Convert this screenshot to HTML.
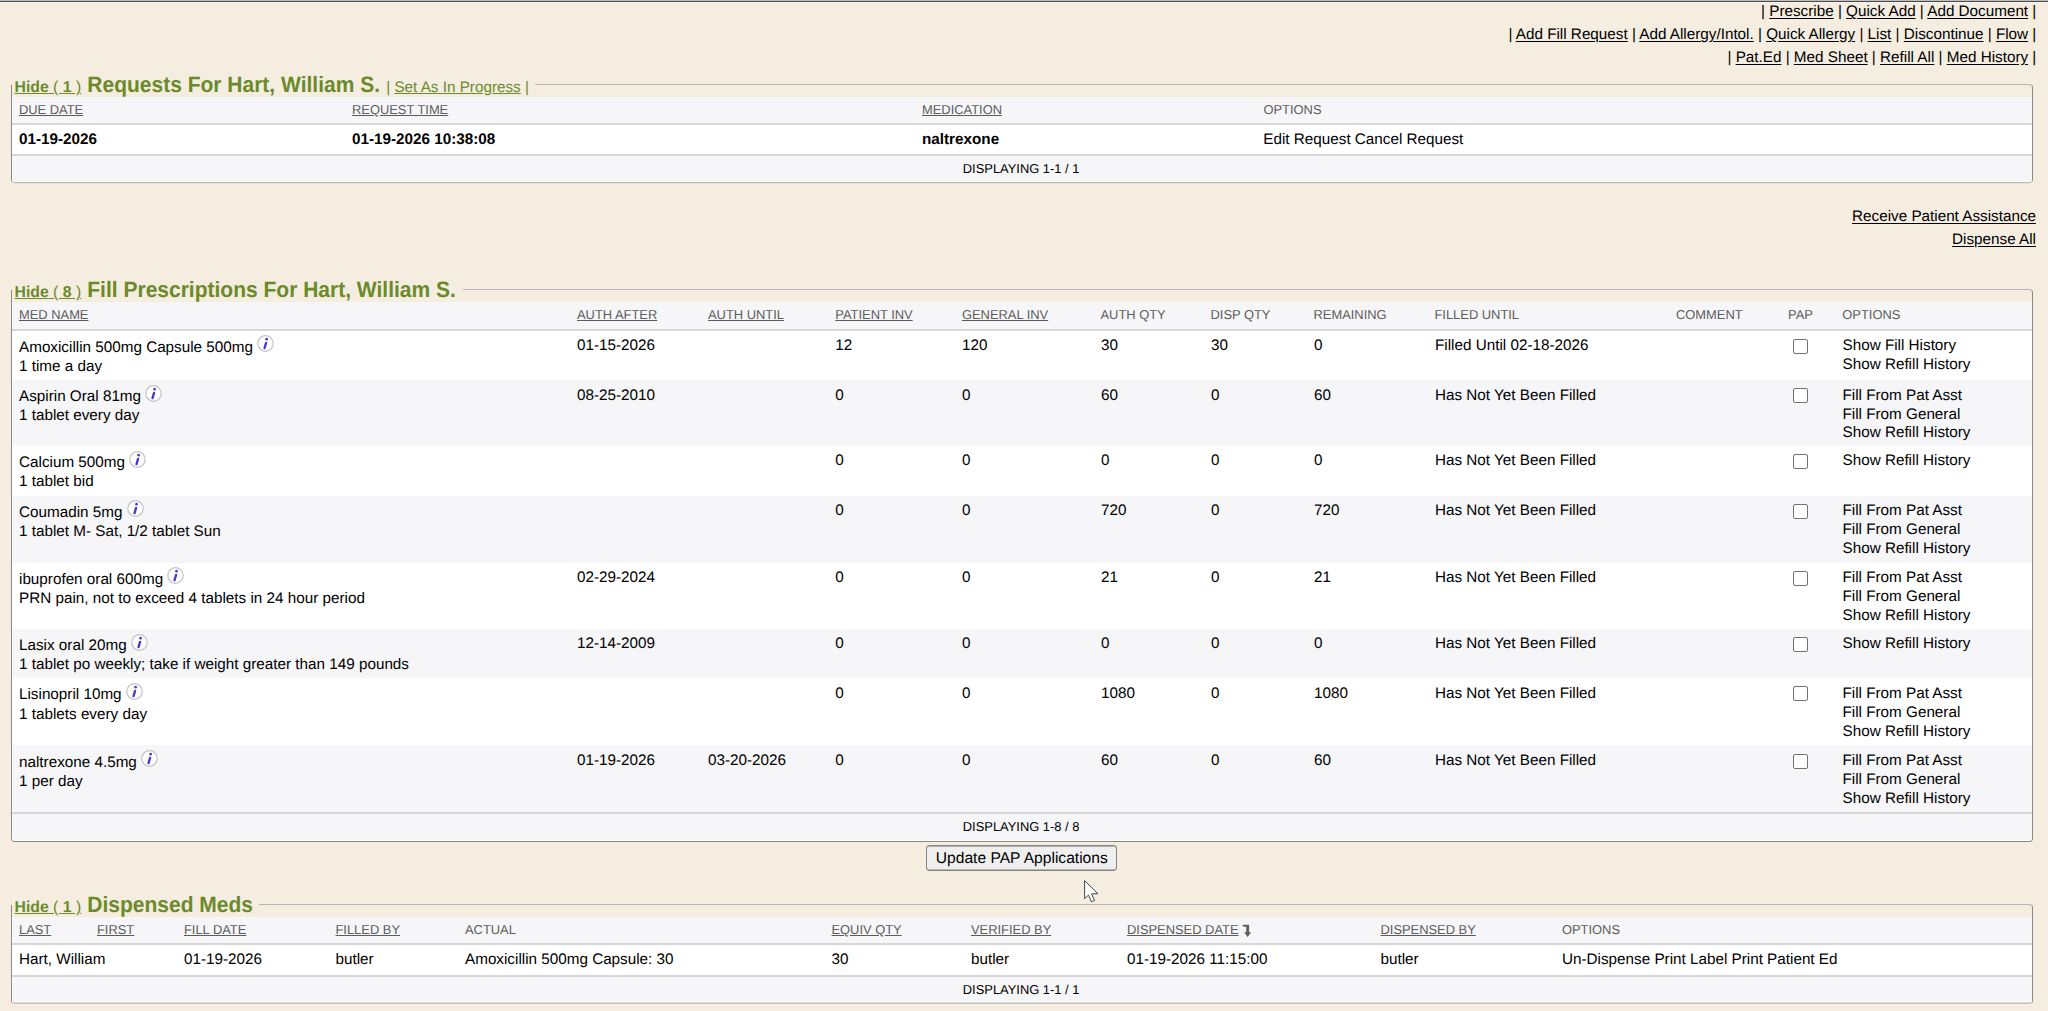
<!DOCTYPE html>
<html><head><meta charset="utf-8"><title>Fill Prescriptions</title>
<style>
html,body{margin:0;padding:0;}
body{width:2048px;height:1011px;overflow:hidden;position:relative;background:#F4EDE0;font-family:"Liberation Sans",sans-serif;color:#000000;}
.t{position:absolute;white-space:nowrap;line-height:1;text-rendering:geometricPrecision;}
.bx{position:absolute;}
.fs{position:absolute;box-sizing:border-box;border:1px solid #888;border-top-color:#b6b6b6;border-radius:4px;border-top-left-radius:0;background:#F4EDE0;overflow:hidden;}
.lg{position:absolute;background:#F4EDE0;height:26px;}
.cb{position:absolute;width:13px;height:13px;border:1px solid #727272;border-radius:2px;background:#fff;}
.ic{position:absolute;width:17px;height:17px;}
</style></head><body>

<div class="bx" style="left:0;top:0;width:2048px;height:1px;background:#bdbdc0"></div>
<div class="bx" style="left:0;top:1px;width:2048px;height:1px;background:#4a4a4a"></div>
<div class="bx" style="left:0;top:2px;width:2048px;height:1px;background:#fbf4e8"></div>
<div class="t" style="top:4.00px;font-size:15.25px;color:#000000;right:11.70px;text-underline-offset:2px;">| <u>Prescribe</u> | <u>Quick Add</u> | <u>Add Document</u> |</div>
<div class="t" style="top:27.00px;font-size:15.25px;color:#000000;right:11.70px;text-underline-offset:2px;">| <u>Add Fill Request</u> | <u>Add Allergy/Intol.</u> | <u>Quick Allergy</u> | <u>List</u> | <u>Discontinue</u> | <u>Flow</u> |</div>
<div class="t" style="top:50.00px;font-size:15.25px;color:#000000;right:11.70px;text-underline-offset:2px;">| <u>Pat.Ed</u> | <u>Med Sheet</u> | <u>Refill All</u> | <u>Med History</u> |</div>
<div class="fs" style="left:11px;top:84px;width:2022px;height:99px;border-bottom-color:#bdbdbd;">
<div class="bx" style="left:0;top:12px;width:2020px;height:26px;background:#F6F6F8"></div>
<div class="bx" style="z-index:1;left:0px;top:38px;width:2020px;height:2px;background:#D7D7D7"></div>
<div class="bx" style="left:0;top:40px;width:2020px;height:29px;background:#fff"></div>
<div class="bx" style="z-index:1;left:0px;top:69px;width:2020px;height:2px;background:#D7D7D7"></div>
<div class="bx" style="left:0;top:71px;width:2020px;height:25px;background:#F6F6F8"></div>
<div class="bx" style="left:0;top:12px;width:1px;height:85px;background:#fff"></div>
<div class="bx" style="left:0;top:96px;width:2020px;height:1px;background:#fff"></div>
</div>
<div class="bx" style="left:14px;top:183px;width:2016px;height:1px;background:#e6e2d9"></div>
<div class="lg" style="left:11px;top:72px;width:524px;height:13px"></div>
<div class="t" style="top:80.00px;font-size:15.8px;color:#6B8A2A;text-decoration:underline;left:14.50px;"><b>Hide</b> ( <b>1</b> )</div>
<div class="t" style="top:75.00px;font-size:21px;color:#6B8A2A;font-weight:bold;left:87.30px;transform:scaleY(1.06);transform-origin:0 17px;">Requests For Hart, William S.</div>
<div class="t" style="top:80.00px;font-size:15.25px;color:#6B8A2A;left:386.20px;">| <u>Set As In Progress</u> |</div>
<div class="t" style="top:104.00px;font-size:12.9px;color:#5c5c5c;text-decoration:underline;left:19.00px;">DUE DATE</div>
<div class="t" style="top:104.00px;font-size:12.9px;color:#5c5c5c;text-decoration:underline;left:352.00px;">REQUEST TIME</div>
<div class="t" style="top:104.00px;font-size:12.9px;color:#5c5c5c;text-decoration:underline;left:922.00px;">MEDICATION</div>
<div class="t" style="top:104.00px;font-size:12.9px;color:#5c5c5c;left:1263.50px;">OPTIONS</div>
<div class="t" style="top:132.00px;font-size:15.25px;color:#000000;font-weight:bold;left:19.00px;">01-19-2026</div>
<div class="t" style="top:132.00px;font-size:15.25px;color:#000000;font-weight:bold;left:352.00px;">01-19-2026 10:38:08</div>
<div class="t" style="top:132.00px;font-size:15.25px;color:#000000;font-weight:bold;left:922.00px;">naltrexone</div>
<div class="t" style="top:132.00px;font-size:15.25px;color:#000000;left:1263.30px;">Edit Request Cancel Request</div>
<div class="t" style="top:163.00px;font-size:12.9px;color:#000000;left:521.10px;width:1000px;text-align:center;">DISPLAYING 1-1 / 1</div>
<div class="t" style="top:209.00px;font-size:15.25px;color:#000000;right:12.00px;text-underline-offset:2px;"><u>Receive Patient Assistance</u></div>
<div class="t" style="top:232.00px;font-size:15.25px;color:#000000;right:12.00px;text-underline-offset:2px;"><u>Dispense All</u></div>
<div class="fs" style="left:11px;top:289px;width:2022px;height:553px;border-bottom-color:#888;">
<div class="bx" style="left:0;top:12px;width:2020px;height:27px;background:#F6F6F8"></div>
<div class="bx" style="z-index:1;left:0px;top:39px;width:2020px;height:2px;background:#D7D7D7"></div>
<div class="bx" style="left:0;top:41px;width:2020px;height:49px;background:#fff"></div>
<div class="bx" style="left:0;top:90px;width:2020px;height:66px;background:#F6F6F8"></div>
<div class="bx" style="left:0;top:156px;width:2020px;height:50px;background:#fff"></div>
<div class="bx" style="left:0;top:206px;width:2020px;height:67px;background:#F6F6F8"></div>
<div class="bx" style="left:0;top:273px;width:2020px;height:66px;background:#fff"></div>
<div class="bx" style="left:0;top:339px;width:2020px;height:49px;background:#F6F6F8"></div>
<div class="bx" style="left:0;top:388px;width:2020px;height:67px;background:#fff"></div>
<div class="bx" style="left:0;top:455px;width:2020px;height:67px;background:#F6F6F8"></div>
<div class="bx" style="z-index:1;left:0px;top:522px;width:2020px;height:2px;background:#D7D7D7"></div>
<div class="bx" style="left:0;top:524px;width:2020px;height:26px;background:#F6F6F8"></div>
<div class="bx" style="left:0;top:12px;width:1px;height:539px;background:#fff"></div>
<div class="bx" style="left:0;top:550px;width:2020px;height:1px;background:#fff"></div>
</div>
<div class="lg" style="left:11px;top:277px;width:452px;height:13px"></div>
<div class="t" style="top:285.00px;font-size:15.8px;color:#6B8A2A;text-decoration:underline;left:14.50px;"><b>Hide</b> ( <b>8</b> )</div>
<div class="t" style="top:280.00px;font-size:21px;color:#6B8A2A;font-weight:bold;left:87.30px;transform:scaleY(1.06);transform-origin:0 17px;">Fill Prescriptions For Hart, William S.</div>
<div class="t" style="top:309.00px;font-size:12.9px;color:#5c5c5c;text-decoration:underline;left:19.00px;">MED NAME</div>
<div class="t" style="top:309.00px;font-size:12.9px;color:#5c5c5c;text-decoration:underline;left:577.00px;">AUTH AFTER</div>
<div class="t" style="top:309.00px;font-size:12.9px;color:#5c5c5c;text-decoration:underline;left:708.00px;">AUTH UNTIL</div>
<div class="t" style="top:309.00px;font-size:12.9px;color:#5c5c5c;text-decoration:underline;left:835.30px;">PATIENT INV</div>
<div class="t" style="top:309.00px;font-size:12.9px;color:#5c5c5c;text-decoration:underline;left:962.00px;">GENERAL INV</div>
<div class="t" style="top:309.00px;font-size:12.9px;color:#5c5c5c;left:1100.50px;">AUTH QTY</div>
<div class="t" style="top:309.00px;font-size:12.9px;color:#5c5c5c;left:1210.50px;">DISP QTY</div>
<div class="t" style="top:309.00px;font-size:12.9px;color:#5c5c5c;left:1313.50px;">REMAINING</div>
<div class="t" style="top:309.00px;font-size:12.9px;color:#5c5c5c;left:1434.50px;">FILLED UNTIL</div>
<div class="t" style="top:309.00px;font-size:12.9px;color:#5c5c5c;left:1676.00px;">COMMENT</div>
<div class="t" style="top:309.00px;font-size:12.9px;color:#5c5c5c;left:1788.00px;">PAP</div>
<div class="t" style="top:309.00px;font-size:12.9px;color:#5c5c5c;left:1842.30px;">OPTIONS</div>
<div class="t" style="top:340.00px;font-size:15.25px;color:#000000;left:19.00px;">Amoxicillin 500mg Capsule 500mg</div>
<div class="t" style="top:359.00px;font-size:15.25px;color:#000000;left:19.00px;">1 time a day</div>
<svg class="ic" style="left:257px;top:335px" width="17" height="17" viewBox="0 0 17 17"><ellipse cx="8.5" cy="8.5" rx="7.7" ry="7.8" fill="#fff" stroke="#c6c6c6" stroke-width="1.25"/><circle cx="9.6" cy="4.2" r="1.4" fill="#5044cc"/><path d="M9.1 7.9 L7.5 13.1" stroke="#4838c8" stroke-width="2.3" stroke-linecap="round"/></svg>
<div class="t" style="top:338.00px;font-size:15.25px;color:#000000;left:577.00px;">01-15-2026</div>
<div class="t" style="top:338.00px;font-size:15.25px;color:#000000;left:835.30px;">12</div>
<div class="t" style="top:338.00px;font-size:15.25px;color:#000000;left:962.00px;">120</div>
<div class="t" style="top:338.00px;font-size:15.25px;color:#000000;left:1101.00px;">30</div>
<div class="t" style="top:338.00px;font-size:15.25px;color:#000000;left:1211.00px;">30</div>
<div class="t" style="top:338.00px;font-size:15.25px;color:#000000;left:1314.00px;">0</div>
<div class="t" style="top:338.00px;font-size:15.25px;color:#000000;left:1435.00px;">Filled Until 02-18-2026</div>
<div class="cb" style="left:1793px;top:339px;"></div>
<div class="t" style="top:338.00px;font-size:15.25px;color:#000000;left:1842.50px;">Show Fill History</div>
<div class="t" style="top:357.00px;font-size:15.25px;color:#000000;left:1842.50px;">Show Refill History</div>
<div class="t" style="top:389.00px;font-size:15.25px;color:#000000;left:19.00px;">Aspirin Oral 81mg</div>
<div class="t" style="top:408.00px;font-size:15.25px;color:#000000;left:19.00px;">1 tablet every day</div>
<svg class="ic" style="left:145px;top:385px" width="17" height="17" viewBox="0 0 17 17"><ellipse cx="8.5" cy="8.5" rx="7.7" ry="7.8" fill="#fff" stroke="#c6c6c6" stroke-width="1.25"/><circle cx="9.6" cy="4.2" r="1.4" fill="#5044cc"/><path d="M9.1 7.9 L7.5 13.1" stroke="#4838c8" stroke-width="2.3" stroke-linecap="round"/></svg>
<div class="t" style="top:388.00px;font-size:15.25px;color:#000000;left:577.00px;">08-25-2010</div>
<div class="t" style="top:388.00px;font-size:15.25px;color:#000000;left:835.30px;">0</div>
<div class="t" style="top:388.00px;font-size:15.25px;color:#000000;left:962.00px;">0</div>
<div class="t" style="top:388.00px;font-size:15.25px;color:#000000;left:1101.00px;">60</div>
<div class="t" style="top:388.00px;font-size:15.25px;color:#000000;left:1211.00px;">0</div>
<div class="t" style="top:388.00px;font-size:15.25px;color:#000000;left:1314.00px;">60</div>
<div class="t" style="top:388.00px;font-size:15.25px;color:#000000;left:1435.00px;">Has Not Yet Been Filled</div>
<div class="cb" style="left:1793px;top:388px;"></div>
<div class="t" style="top:388.00px;font-size:15.25px;color:#000000;left:1842.50px;">Fill From Pat Asst</div>
<div class="t" style="top:407.00px;font-size:15.25px;color:#000000;left:1842.50px;">Fill From General</div>
<div class="t" style="top:425.00px;font-size:15.25px;color:#000000;left:1842.50px;">Show Refill History</div>
<div class="t" style="top:455.00px;font-size:15.25px;color:#000000;left:19.00px;">Calcium 500mg</div>
<div class="t" style="top:474.00px;font-size:15.25px;color:#000000;left:19.00px;">1 tablet bid</div>
<svg class="ic" style="left:129px;top:451px" width="17" height="17" viewBox="0 0 17 17"><ellipse cx="8.5" cy="8.5" rx="7.7" ry="7.8" fill="#fff" stroke="#c6c6c6" stroke-width="1.25"/><circle cx="9.6" cy="4.2" r="1.4" fill="#5044cc"/><path d="M9.1 7.9 L7.5 13.1" stroke="#4838c8" stroke-width="2.3" stroke-linecap="round"/></svg>
<div class="t" style="top:453.00px;font-size:15.25px;color:#000000;left:835.30px;">0</div>
<div class="t" style="top:453.00px;font-size:15.25px;color:#000000;left:962.00px;">0</div>
<div class="t" style="top:453.00px;font-size:15.25px;color:#000000;left:1101.00px;">0</div>
<div class="t" style="top:453.00px;font-size:15.25px;color:#000000;left:1211.00px;">0</div>
<div class="t" style="top:453.00px;font-size:15.25px;color:#000000;left:1314.00px;">0</div>
<div class="t" style="top:453.00px;font-size:15.25px;color:#000000;left:1435.00px;">Has Not Yet Been Filled</div>
<div class="cb" style="left:1793px;top:454px;"></div>
<div class="t" style="top:453.00px;font-size:15.25px;color:#000000;left:1842.50px;">Show Refill History</div>
<div class="t" style="top:505.00px;font-size:15.25px;color:#000000;left:19.00px;">Coumadin 5mg</div>
<div class="t" style="top:524.00px;font-size:15.25px;color:#000000;left:19.00px;">1 tablet M- Sat, 1/2 tablet Sun</div>
<svg class="ic" style="left:127px;top:500px" width="17" height="17" viewBox="0 0 17 17"><ellipse cx="8.5" cy="8.5" rx="7.7" ry="7.8" fill="#fff" stroke="#c6c6c6" stroke-width="1.25"/><circle cx="9.6" cy="4.2" r="1.4" fill="#5044cc"/><path d="M9.1 7.9 L7.5 13.1" stroke="#4838c8" stroke-width="2.3" stroke-linecap="round"/></svg>
<div class="t" style="top:503.00px;font-size:15.25px;color:#000000;left:835.30px;">0</div>
<div class="t" style="top:503.00px;font-size:15.25px;color:#000000;left:962.00px;">0</div>
<div class="t" style="top:503.00px;font-size:15.25px;color:#000000;left:1101.00px;">720</div>
<div class="t" style="top:503.00px;font-size:15.25px;color:#000000;left:1211.00px;">0</div>
<div class="t" style="top:503.00px;font-size:15.25px;color:#000000;left:1314.00px;">720</div>
<div class="t" style="top:503.00px;font-size:15.25px;color:#000000;left:1435.00px;">Has Not Yet Been Filled</div>
<div class="cb" style="left:1793px;top:504px;"></div>
<div class="t" style="top:503.00px;font-size:15.25px;color:#000000;left:1842.50px;">Fill From Pat Asst</div>
<div class="t" style="top:522.00px;font-size:15.25px;color:#000000;left:1842.50px;">Fill From General</div>
<div class="t" style="top:541.00px;font-size:15.25px;color:#000000;left:1842.50px;">Show Refill History</div>
<div class="t" style="top:572.00px;font-size:15.25px;color:#000000;left:19.00px;">ibuprofen oral 600mg</div>
<div class="t" style="top:591.00px;font-size:15.25px;color:#000000;left:19.00px;">PRN pain, not to exceed 4 tablets in 24 hour period</div>
<svg class="ic" style="left:167px;top:567px" width="17" height="17" viewBox="0 0 17 17"><ellipse cx="8.5" cy="8.5" rx="7.7" ry="7.8" fill="#fff" stroke="#c6c6c6" stroke-width="1.25"/><circle cx="9.6" cy="4.2" r="1.4" fill="#5044cc"/><path d="M9.1 7.9 L7.5 13.1" stroke="#4838c8" stroke-width="2.3" stroke-linecap="round"/></svg>
<div class="t" style="top:570.00px;font-size:15.25px;color:#000000;left:577.00px;">02-29-2024</div>
<div class="t" style="top:570.00px;font-size:15.25px;color:#000000;left:835.30px;">0</div>
<div class="t" style="top:570.00px;font-size:15.25px;color:#000000;left:962.00px;">0</div>
<div class="t" style="top:570.00px;font-size:15.25px;color:#000000;left:1101.00px;">21</div>
<div class="t" style="top:570.00px;font-size:15.25px;color:#000000;left:1211.00px;">0</div>
<div class="t" style="top:570.00px;font-size:15.25px;color:#000000;left:1314.00px;">21</div>
<div class="t" style="top:570.00px;font-size:15.25px;color:#000000;left:1435.00px;">Has Not Yet Been Filled</div>
<div class="cb" style="left:1793px;top:571px;"></div>
<div class="t" style="top:570.00px;font-size:15.25px;color:#000000;left:1842.50px;">Fill From Pat Asst</div>
<div class="t" style="top:589.00px;font-size:15.25px;color:#000000;left:1842.50px;">Fill From General</div>
<div class="t" style="top:608.00px;font-size:15.25px;color:#000000;left:1842.50px;">Show Refill History</div>
<div class="t" style="top:638.00px;font-size:15.25px;color:#000000;left:19.00px;">Lasix oral 20mg</div>
<div class="t" style="top:657.00px;font-size:15.25px;color:#000000;left:19.00px;">1 tablet po weekly; take if weight greater than 149 pounds</div>
<svg class="ic" style="left:131px;top:634px" width="17" height="17" viewBox="0 0 17 17"><ellipse cx="8.5" cy="8.5" rx="7.7" ry="7.8" fill="#fff" stroke="#c6c6c6" stroke-width="1.25"/><circle cx="9.6" cy="4.2" r="1.4" fill="#5044cc"/><path d="M9.1 7.9 L7.5 13.1" stroke="#4838c8" stroke-width="2.3" stroke-linecap="round"/></svg>
<div class="t" style="top:636.00px;font-size:15.25px;color:#000000;left:577.00px;">12-14-2009</div>
<div class="t" style="top:636.00px;font-size:15.25px;color:#000000;left:835.30px;">0</div>
<div class="t" style="top:636.00px;font-size:15.25px;color:#000000;left:962.00px;">0</div>
<div class="t" style="top:636.00px;font-size:15.25px;color:#000000;left:1101.00px;">0</div>
<div class="t" style="top:636.00px;font-size:15.25px;color:#000000;left:1211.00px;">0</div>
<div class="t" style="top:636.00px;font-size:15.25px;color:#000000;left:1314.00px;">0</div>
<div class="t" style="top:636.00px;font-size:15.25px;color:#000000;left:1435.00px;">Has Not Yet Been Filled</div>
<div class="cb" style="left:1793px;top:637px;"></div>
<div class="t" style="top:636.00px;font-size:15.25px;color:#000000;left:1842.50px;">Show Refill History</div>
<div class="t" style="top:687.00px;font-size:15.25px;color:#000000;left:19.00px;">Lisinopril 10mg</div>
<div class="t" style="top:707.00px;font-size:15.25px;color:#000000;left:19.00px;">1 tablets every day</div>
<svg class="ic" style="left:126px;top:683px" width="17" height="17" viewBox="0 0 17 17"><ellipse cx="8.5" cy="8.5" rx="7.7" ry="7.8" fill="#fff" stroke="#c6c6c6" stroke-width="1.25"/><circle cx="9.6" cy="4.2" r="1.4" fill="#5044cc"/><path d="M9.1 7.9 L7.5 13.1" stroke="#4838c8" stroke-width="2.3" stroke-linecap="round"/></svg>
<div class="t" style="top:686.00px;font-size:15.25px;color:#000000;left:835.30px;">0</div>
<div class="t" style="top:686.00px;font-size:15.25px;color:#000000;left:962.00px;">0</div>
<div class="t" style="top:686.00px;font-size:15.25px;color:#000000;left:1101.00px;">1080</div>
<div class="t" style="top:686.00px;font-size:15.25px;color:#000000;left:1211.00px;">0</div>
<div class="t" style="top:686.00px;font-size:15.25px;color:#000000;left:1314.00px;">1080</div>
<div class="t" style="top:686.00px;font-size:15.25px;color:#000000;left:1435.00px;">Has Not Yet Been Filled</div>
<div class="cb" style="left:1793px;top:686px;"></div>
<div class="t" style="top:686.00px;font-size:15.25px;color:#000000;left:1842.50px;">Fill From Pat Asst</div>
<div class="t" style="top:705.00px;font-size:15.25px;color:#000000;left:1842.50px;">Fill From General</div>
<div class="t" style="top:724.00px;font-size:15.25px;color:#000000;left:1842.50px;">Show Refill History</div>
<div class="t" style="top:755.00px;font-size:15.25px;color:#000000;left:19.00px;">naltrexone 4.5mg</div>
<div class="t" style="top:774.00px;font-size:15.25px;color:#000000;left:19.00px;">1 per day</div>
<svg class="ic" style="left:141px;top:750px" width="17" height="17" viewBox="0 0 17 17"><ellipse cx="8.5" cy="8.5" rx="7.7" ry="7.8" fill="#fff" stroke="#c6c6c6" stroke-width="1.25"/><circle cx="9.6" cy="4.2" r="1.4" fill="#5044cc"/><path d="M9.1 7.9 L7.5 13.1" stroke="#4838c8" stroke-width="2.3" stroke-linecap="round"/></svg>
<div class="t" style="top:753.00px;font-size:15.25px;color:#000000;left:577.00px;">01-19-2026</div>
<div class="t" style="top:753.00px;font-size:15.25px;color:#000000;left:708.00px;">03-20-2026</div>
<div class="t" style="top:753.00px;font-size:15.25px;color:#000000;left:835.30px;">0</div>
<div class="t" style="top:753.00px;font-size:15.25px;color:#000000;left:962.00px;">0</div>
<div class="t" style="top:753.00px;font-size:15.25px;color:#000000;left:1101.00px;">60</div>
<div class="t" style="top:753.00px;font-size:15.25px;color:#000000;left:1211.00px;">0</div>
<div class="t" style="top:753.00px;font-size:15.25px;color:#000000;left:1314.00px;">60</div>
<div class="t" style="top:753.00px;font-size:15.25px;color:#000000;left:1435.00px;">Has Not Yet Been Filled</div>
<div class="cb" style="left:1793px;top:754px;"></div>
<div class="t" style="top:753.00px;font-size:15.25px;color:#000000;left:1842.50px;">Fill From Pat Asst</div>
<div class="t" style="top:772.00px;font-size:15.25px;color:#000000;left:1842.50px;">Fill From General</div>
<div class="t" style="top:791.00px;font-size:15.25px;color:#000000;left:1842.50px;">Show Refill History</div>
<div class="t" style="top:821.00px;font-size:12.9px;color:#000000;left:521.10px;width:1000px;text-align:center;">DISPLAYING 1-8 / 8</div>
<div class="bx" style="left:926px;top:845px;width:189px;height:24px;border:1px solid #858585;border-radius:3px;background:#efefef;box-shadow:inset 0 1px 0 #b4b4b4,inset 0 -1px 0 #b4b4b4;"></div>
<div class="t" style="top:851.00px;font-size:15.6px;color:#000000;left:521.80px;width:1000px;text-align:center;">Update PAP Applications</div>
<div class="fs" style="left:11px;top:904px;width:2022px;height:100px;border-bottom-color:#c2c1bc;">
<div class="bx" style="left:0;top:12px;width:2020px;height:26px;background:#F6F6F8"></div>
<div class="bx" style="z-index:1;left:0px;top:38px;width:2020px;height:2px;background:#D7D7D7"></div>
<div class="bx" style="left:0;top:40px;width:2020px;height:30px;background:#fff"></div>
<div class="bx" style="z-index:1;left:0px;top:70px;width:2020px;height:2px;background:#D7D7D7"></div>
<div class="bx" style="left:0;top:72px;width:2020px;height:24px;background:#F6F6F8"></div>
<div class="bx" style="left:0;top:96px;width:2020px;height:1px;background:#fafafb"></div>
<div class="bx" style="left:0;top:12px;width:1px;height:86px;background:#fff"></div>
<div class="bx" style="left:0;top:97px;width:2020px;height:1px;background:#dadada"></div>
</div>
<div class="lg" style="left:11px;top:892px;width:248px;height:13px"></div>
<div class="t" style="top:900.00px;font-size:15.8px;color:#6B8A2A;text-decoration:underline;left:14.50px;"><b>Hide</b> ( <b>1</b> )</div>
<div class="t" style="top:895.00px;font-size:21px;color:#6B8A2A;font-weight:bold;left:87.30px;transform:scaleY(1.06);transform-origin:0 17px;">Dispensed Meds</div>
<div class="t" style="top:924.00px;font-size:12.9px;color:#5c5c5c;text-decoration:underline;left:19.00px;">LAST</div>
<div class="t" style="top:924.00px;font-size:12.9px;color:#5c5c5c;text-decoration:underline;left:97.00px;">FIRST</div>
<div class="t" style="top:924.00px;font-size:12.9px;color:#5c5c5c;text-decoration:underline;left:184.00px;">FILL DATE</div>
<div class="t" style="top:924.00px;font-size:12.9px;color:#5c5c5c;text-decoration:underline;left:335.50px;">FILLED BY</div>
<div class="t" style="top:924.00px;font-size:12.9px;color:#5c5c5c;left:465.00px;">ACTUAL</div>
<div class="t" style="top:924.00px;font-size:12.9px;color:#5c5c5c;text-decoration:underline;left:831.50px;">EQUIV QTY</div>
<div class="t" style="top:924.00px;font-size:12.9px;color:#5c5c5c;text-decoration:underline;left:971.00px;">VERIFIED BY</div>
<div class="t" style="top:924.00px;font-size:12.9px;color:#5c5c5c;text-decoration:underline;left:1127.00px;">DISPENSED DATE</div>
<div class="t" style="top:924.00px;font-size:12.9px;color:#5c5c5c;text-decoration:underline;left:1380.50px;">DISPENSED BY</div>
<div class="t" style="top:924.00px;font-size:12.9px;color:#5c5c5c;left:1562.00px;">OPTIONS</div>
<svg class="bx" style="left:1242px;top:924px" width="12" height="14" viewBox="0 0 12 14"><path d="M0.4 0.7 H7.1 V8.3 H9.1 L5.6 12.9 L2.2 8.3 H4.2 V2.7 H1.4 Z" fill="#5f5f5f"/></svg>
<div class="t" style="top:952.00px;font-size:15.25px;color:#000000;left:19.00px;">Hart, William</div>
<div class="t" style="top:952.00px;font-size:15.25px;color:#000000;left:184.00px;">01-19-2026</div>
<div class="t" style="top:952.00px;font-size:15.25px;color:#000000;left:335.50px;">butler</div>
<div class="t" style="top:952.00px;font-size:15.25px;color:#000000;left:465.00px;">Amoxicillin 500mg Capsule: 30</div>
<div class="t" style="top:952.00px;font-size:15.25px;color:#000000;left:831.50px;">30</div>
<div class="t" style="top:952.00px;font-size:15.25px;color:#000000;left:971.00px;">butler</div>
<div class="t" style="top:952.00px;font-size:15.25px;color:#000000;left:1127.00px;">01-19-2026 11:15:00</div>
<div class="t" style="top:952.00px;font-size:15.25px;color:#000000;left:1380.50px;">butler</div>
<div class="t" style="top:952.00px;font-size:15.25px;color:#000000;left:1562.00px;">Un-Dispense Print Label Print Patient Ed</div>
<div class="t" style="top:984.00px;font-size:12.9px;color:#000000;left:521.10px;width:1000px;text-align:center;">DISPLAYING 1-1 / 1</div>
<svg class="bx" style="left:1084px;top:880px" width="16" height="24" viewBox="0 0 16 24"><path d="M0.6 0.6 L0.6 18.6 L4.5 15.1 L7.4 21.7 L10.5 20.5 L7.6 13.9 L13.9 13.7 Z" fill="#fff" stroke="#3c3c3c" stroke-width="0.95" stroke-linejoin="miter"/></svg>
</body></html>
